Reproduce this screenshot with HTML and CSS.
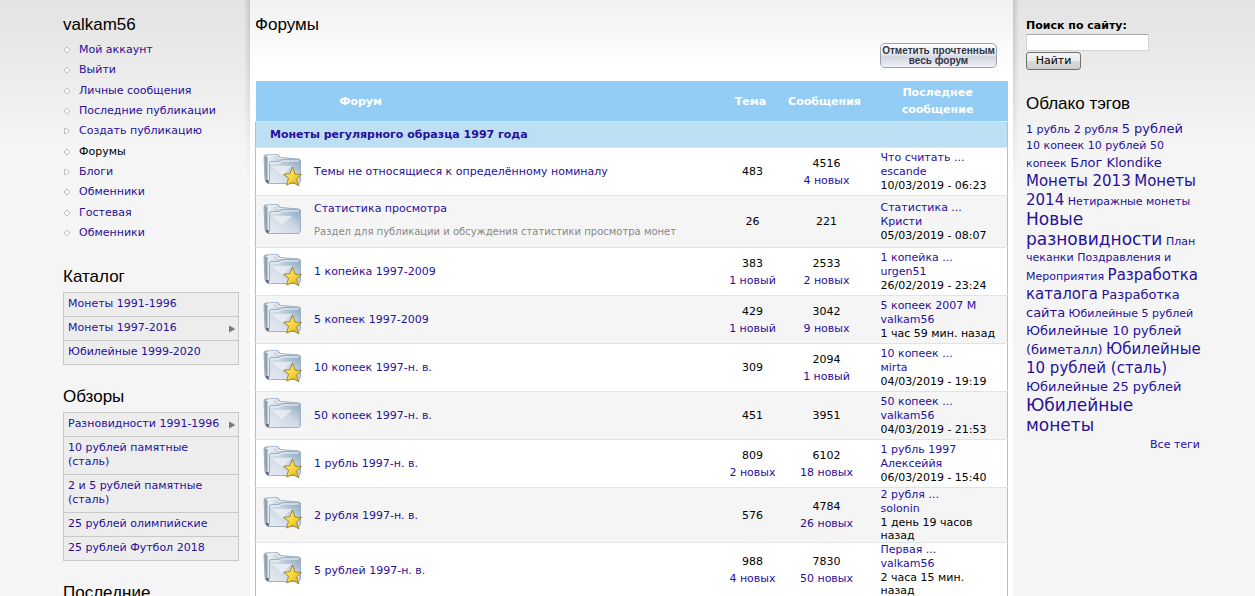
FILE: index.html
```html
<!DOCTYPE html>
<html lang="ru">
<head>
<meta charset="utf-8">
<title>Форумы</title>
<link rel="stylesheet" href="styles.css">
</head>
<body>
<svg class="defs" aria-hidden="true">
  <defs>
    <linearGradient id="front" x1="0" y1="1" x2="1" y2="0"><stop offset="0" stop-color="#e9edf3"/><stop offset=".55" stop-color="#cdd8e4"/><stop offset="1" stop-color="#8aa5bf"/></linearGradient>
    <linearGradient id="back" x1="0" y1="0" x2="1" y2="0"><stop offset="0" stop-color="#9cacbb"/><stop offset=".06" stop-color="#8496a7"/><stop offset=".13" stop-color="#eef2f6"/><stop offset=".4" stop-color="#c3d0dc"/><stop offset="1" stop-color="#7695b1"/></linearGradient>
    <linearGradient id="gold" x1="0" y1="0" x2="1" y2="1"><stop offset="0" stop-color="#fff27a"/><stop offset=".5" stop-color="#f7d93c"/><stop offset="1" stop-color="#d9a51c"/></linearGradient>
    <symbol id="folder" viewBox="0 0 40 34">
      <path d="M2 4Q2 2 4 2L15 1.500Q17 1.500 18 4.500L37 6Q38.500 6.500 38.500 8.500V28H7L4.500 29.500Q3 29 3 26Z" fill="url(#back)" stroke="#a3b4c4"/>
      <path d="M4 3.500L14 2.500Q15.500 3 16.500 5.500L36.500 7.500" fill="none" stroke="#f4f7fa"/>
      <path d="M7.500 10.500Q7.500 8.500 9 8.500H16.500L20 6.500H37Q39 6.500 38.500 8.500L38 29Q38 30.500 36.500 30.500H5.500Q7.500 29.500 7.500 27Z" fill="url(#front)" stroke="#9fb2c4"/>
      <path d="M8.500 10H17L20.500 8H37" fill="none" stroke="#f2f6fa"/>
      <path d="M10 13H30L20 22.500Z" fill="#e9eff4" opacity=".8"/>
      <path d="M4 27H6.500V30H5.500Q4 29.500 4 27Z" fill="#50606f"/>
    </symbol>
    <symbol id="folder-new" viewBox="0 0 40 34">
      <use href="#folder" width="40" height="34"/>
      <path d="M30.500 14L33 21L39.500 21.500L34.500 26L37 33L31 29.500L24.500 32L26.500 25L21.500 21.500L28 20.500Z" fill="url(#gold)" stroke="#8a7430" stroke-width=".8" stroke-linejoin="round"/>
    </symbol>
    <symbol id="leaf" viewBox="0 0 8 8"><path d="M4 1L7 4L4 7L1 4Z" fill="#fff" stroke="#bcbcbc"/></symbol>
    <symbol id="collapsed" viewBox="0 0 8 8"><path d="M1.500 1.500H3.500L6.500 4L3.500 6.500H1.500Z" fill="#fff" stroke="#bcbcbc"/></symbol>
    <symbol id="arrow" viewBox="0 0 8 8"><path d="M1 1L7.500 4.500L1 8Z" fill="#7b7b7b"/></symbol>
  </defs>
</svg>
<div class="page">
  <aside class="left">
    <section class="block">
      <h2>valkam56</h2>
      <ul class="nav">
        <li><svg><use href="#leaf"/></svg><a href="#">Мой аккаунт</a></li>
        <li><svg><use href="#leaf"/></svg><a href="#">Выйти</a></li>
        <li><svg><use href="#leaf"/></svg><a href="#">Личные сообщения</a></li>
        <li><svg><use href="#leaf"/></svg><a href="#">Последние публикации</a></li>
        <li><svg><use href="#collapsed"/></svg><a href="#">Создать публикацию</a></li>
        <li><svg><use href="#leaf"/></svg><a href="#" class="active">Форумы</a></li>
        <li><svg><use href="#collapsed"/></svg><a href="#">Блоги</a></li>
        <li><svg><use href="#leaf"/></svg><a href="#">Обменники</a></li>
        <li><svg><use href="#leaf"/></svg><a href="#">Гостевая</a></li>
        <li><svg><use href="#leaf"/></svg><a href="#">Обменники</a></li>
      </ul>
    </section>
    <section class="block">
      <h2>Каталог</h2>
      <ul class="box-menu">
        <li><a href="#">Монеты 1991-1996</a></li>
        <li><a href="#">Монеты 1997-2016</a><svg><use href="#arrow"/></svg></li>
        <li><a href="#">Юбилейные 1999-2020</a></li>
      </ul>
    </section>
    <section class="block">
      <h2>Обзоры</h2>
      <ul class="box-menu">
        <li><a href="#">Разновидности 1991-1996</a><svg><use href="#arrow"/></svg></li>
        <li><a href="#">10 рублей памятные (сталь)</a></li>
        <li><a href="#">2 и 5 рублей памятные (сталь)</a></li>
        <li><a href="#">25 рублей олимпийские</a></li>
        <li><a href="#">25 рублей Футбол 2018</a></li>
      </ul>
    </section>
    <section class="block">
      <h2>Последние</h2>
    </section>
  </aside>
  <main class="main">
    <h1>Форумы</h1>
    <div class="actions"><button type="button" class="mark">Отметить прочтенным<br>весь форум</button></div>
    <table class="forum">
      <colgroup><col><col class="c-topics"><col class="c-posts"><col class="c-last"></colgroup>
      <thead>
        <tr><th class="h-forum">Форум</th><th>Тема</th><th>Сообщения</th><th>Последнее сообщение</th></tr>
      </thead>
      <tbody>
        <tr class="cat"><td colspan="4"><a href="#">Монеты регулярного образца 1997 года</a></td></tr>
        <tr><td><div class="name"><svg><use href="#folder-new"/></svg><a href="#">Темы не относящиеся к определённому номиналу</a></div></td><td class="num">483</td><td class="num">4516<a href="#">4 новых</a></td><td class="last"><a href="#">Что считать ...</a><a href="#">escande</a>10/03/2019 - 06:23</td></tr>
        <tr class="even described"><td><div class="name"><svg><use href="#folder"/></svg><div><a href="#">Статистика просмотра</a><p>Раздел для публикации и обсуждения статистики просмотра монет</p></div></div></td><td class="num">26</td><td class="num">221</td><td class="last"><a href="#">Статистика ...</a><a href="#">Кристи</a>05/03/2019 - 08:07</td></tr>
        <tr><td><div class="name"><svg><use href="#folder-new"/></svg><a href="#">1 копейка 1997-2009</a></div></td><td class="num">383<a href="#">1 новый</a></td><td class="num">2533<a href="#">2 новых</a></td><td class="last"><a href="#">1 копейка ...</a><a href="#">urgen51</a>26/02/2019 - 23:24</td></tr>
        <tr class="even"><td><div class="name"><svg><use href="#folder-new"/></svg><a href="#">5 копеек 1997-2009</a></div></td><td class="num">429<a href="#">1 новый</a></td><td class="num">3042<a href="#">9 новых</a></td><td class="last"><a href="#">5 копеек 2007 М</a><a href="#">valkam56</a>1 час 59 мин. назад</td></tr>
        <tr><td><div class="name"><svg><use href="#folder-new"/></svg><a href="#">10 копеек 1997-н. в.</a></div></td><td class="num">309</td><td class="num">2094<a href="#">1 новый</a></td><td class="last"><a href="#">10 копеек ...</a><a href="#">мirta</a>04/03/2019 - 19:19</td></tr>
        <tr class="even"><td><div class="name"><svg><use href="#folder"/></svg><a href="#">50 копеек 1997-н. в.</a></div></td><td class="num">451</td><td class="num">3951</td><td class="last"><a href="#">50 копеек ...</a><a href="#">valkam56</a>04/03/2019 - 21:53</td></tr>
        <tr><td><div class="name"><svg><use href="#folder-new"/></svg><a href="#">1 рубль 1997-н. в.</a></div></td><td class="num">809<a href="#">2 новых</a></td><td class="num">6102<a href="#">18 новых</a></td><td class="last"><a href="#">1 рубль 1997</a><a href="#">Алексеййя</a>06/03/2019 - 15:40</td></tr>
        <tr class="even"><td><div class="name"><svg><use href="#folder-new"/></svg><a href="#">2 рубля 1997-н. в.</a></div></td><td class="num">576</td><td class="num">4784<a href="#">26 новых</a></td><td class="last"><a href="#">2 рубля ...</a><a href="#">solonin</a>1 день 19 часов назад</td></tr>
        <tr><td><div class="name"><svg><use href="#folder-new"/></svg><a href="#">5 рублей 1997-н. в.</a></div></td><td class="num">988<a href="#">4 новых</a></td><td class="num">7830<a href="#">50 новых</a></td><td class="last"><a href="#">Первая ...</a><a href="#">valkam56</a>2 часа 15 мин. назад</td></tr>
      </tbody>
    </table>
  </main>
  <aside class="right">
    <form class="search">
      <label for="q">Поиск по сайту:</label>
      <input id="q" type="text">
      <button type="button">Найти</button>
    </form>
    <section>
      <h2>Облако тэгов</h2>
      <div class="tags">
        <a href="#">1 рубль</a> <a href="#">2 рубля</a> <a href="#" class="t2">5 рублей</a><br>
        <a href="#">10 копеек</a> <a href="#">10 рублей</a> <a href="#">50<br>копеек</a> <a href="#" class="t2">Блог Klondike</a><br>
        <a href="#" class="t3">Монеты 2013</a> <a href="#" class="t3">Монеты<br>2014</a> <a href="#">Нетиражные монеты</a><br>
        <a href="#" class="t4">Новые<br>разновидности</a> <a href="#">План<br>чеканки</a> <a href="#">Поздравления и<br>Мероприятия</a> <a href="#" class="t3">Разработка<br>каталога</a> <a href="#" class="t2">Разработка<br>сайта</a> <a href="#">Юбилейные 5 рублей</a><br>
        <a href="#" class="t2">Юбилейные 10 рублей<br>(биметалл)</a> <a href="#" class="t3">Юбилейные<br>10 рублей (сталь)</a><br>
        <a href="#" class="t2">Юбилейные 25 рублей</a><br>
        <a href="#" class="t4">Юбилейные<br>монеты</a>
      </div>
      <div class="more"><a href="#">Все теги</a></div>
    </section>
  </aside>
</div>
</body>
</html>
```
FILE: styles.css
```css
* { box-sizing: border-box; }
html, body { margin: 0; height: 100vh; overflow: hidden; }
body {
  background: #f5f5f5 linear-gradient(#e3e3e3, #f5f5f5) no-repeat top / 100% 150px;
  color: #000;
  font: 11px/17px "DejaVu Sans", sans-serif;
}
a { color: #27109b; text-decoration: none; }
h1, h2 { margin: 0; font: 17px/20px "Liberation Sans", Arial, sans-serif; }
ul { list-style: none; margin: 0; padding: 0; }
.defs { position: absolute; width: 0; height: 0; }
.page { display: grid; grid-template-columns: 250px minmax(0, 1fr) 242px; min-height: 100vh; }

.left { padding: 15px 11px 0 63px; }
.block { margin-bottom: 22px; }
.nav { padding-top: 5px; margin-bottom: 24px; }
.nav li { display: flex; align-items: center; gap: 8px; line-height: 20px; }
.nav li:nth-child(3n) { padding-top: 1px; }
.nav svg { width: 8px; height: 8px; flex: none; }
.nav .active { color: #000; }
.box-menu { margin-top: 5px; border: 1px solid #c8c8c8; background: #ededed; }
.box-menu li { display: flex; align-items: center; justify-content: space-between; padding: 4px 2px 5px 4px; line-height: 14px; }
.box-menu li + li { border-top: 1px solid #c8c8c8; }
.box-menu a { max-width: 156px; }
.box-menu svg { width: 8px; height: 9px; flex: none; }

.main {
  position: relative;
  padding: 15px 5px 0;
  background: #fff linear-gradient(#f1f1f1, #fff) no-repeat top / 100% 68px;
}
.main::before, .main::after {
  content: "";
  position: absolute;
  top: 0;
  width: 6px;
  height: 180px;
  -webkit-mask: linear-gradient(#000, transparent);
  mask: linear-gradient(#000, transparent);
}
.main::before { right: 100%; background: linear-gradient(to left, #c4c4c4, transparent); }
.main::after { left: 100%; background: linear-gradient(to right, #c4c4c4, transparent); }
.actions { display: flex; justify-content: flex-end; padding: 8px 11px 13px 0; }
.mark {
  height: 25px; padding: 0 1px; border: 1px solid #9ba3b1; border-radius: 5px;
  background: linear-gradient(#fff, #e6e9f0 45%, #d0d5df 55%, #f0f2f6);
  color: #30384a; font: bold 10px/10px "Liberation Sans", Arial, sans-serif;
  min-width: 117px; white-space: nowrap;
}
.forum { width: 100%; table-layout: fixed; border-collapse: collapse; }
.c-topics { width: 66px; }
.c-posts { width: 82px; }
.c-last { width: 140px; }
.forum th { height: 40px; padding: 3px 18px; background: #93ccf5; color: #fff; text-align: center; }
.forum th:nth-child(2), .forum th:nth-child(3) { padding: 3px 4px 3px 0; }
.forum .h-forum { text-align: left; padding-left: 84px; }
.forum td { height: 48px; padding: 0; border-top: 1px solid #dfe4e8; vertical-align: middle; }
.forum tbody { border: 1px solid #93c8e8; border-bottom: 0; }
.forum .cat td { height: 26px; padding-left: 14px; background: #bddff4; font-weight: bold; }
.even { background: #f5f5f5; }
.forum .described td { height: 52px; }
.name { display: flex; align-items: center; gap: 12px; padding-left: 6px; }
.name svg { width: 40px; height: 34px; flex: none; margin-bottom: 4px; }
.name p { margin: 8px 0 4px; color: #888; font-size: 10px; line-height: 14px; }
.num { text-align: center; }
.num a, .last a { display: block; }
.forum .last { padding: 0 11px 0 13px; line-height: 13px; }
.last a { line-height: 14px; }

.right { padding: 17px 53px 0 13px; }
.search { display: flex; flex-direction: column; align-items: flex-start; }
.search label { font-weight: bold; }
.search input { width: 123px; height: 17px; border: 1px solid #d5d5d5; border-top-color: #aaa; background: #fff; padding: 0 2px; }
.search button {
  margin: 1px 0 24px; width: 55px; height: 18px; padding: 0; border: 1px solid #707070; border-radius: 3px;
  background: linear-gradient(#f4f4f4, #ebebeb 50%, #dadada 50%, #cfcfcf);
  font: 11px/14px "DejaVu Sans", sans-serif; color: #000;
}
.tags { padding-top: 6px; line-height: 16px; white-space: nowrap; }
.t2 { font-size: 13px; line-height: 17px; }
.t3 { font-size: 15px; line-height: 18px; }
.t4 { font-size: 17px; line-height: 19px; }
.more { text-align: right; padding-right: 2px; }
```
